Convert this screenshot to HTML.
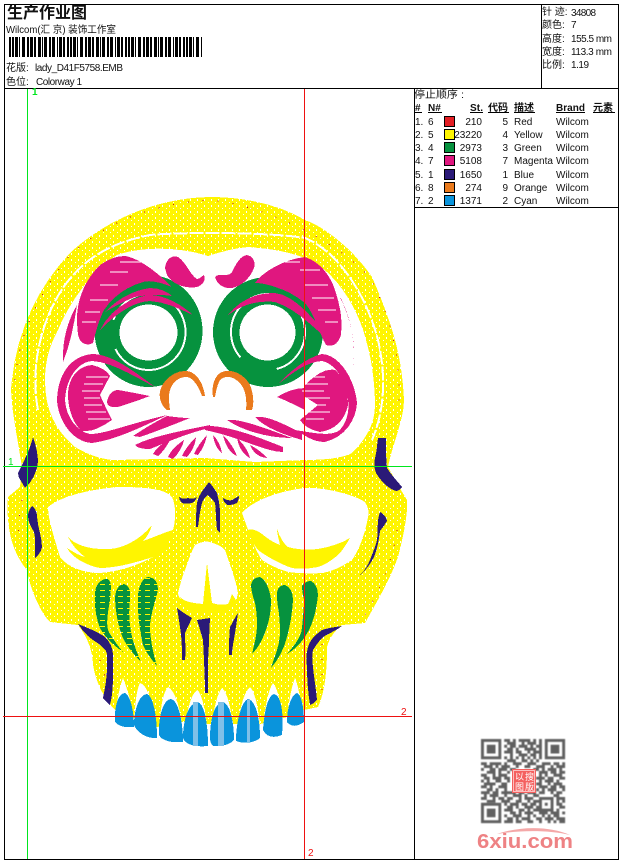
<!DOCTYPE html>
<html><head><meta charset="utf-8"><style>
html,body{margin:0;padding:0;background:#fff}
svg{display:block}
text{font-family:"Liberation Sans","WenQuanYi Zen Hei","Noto Sans CJK SC",sans-serif;font-size:10px;fill:#111}
.b{font-weight:bold}
</style></head><body>
<svg width="620" height="860" viewBox="0 0 620 860" xmlns="http://www.w3.org/2000/svg">
<defs>
<pattern id="y" width="7" height="6" patternUnits="userSpaceOnUse">
<rect width="7" height="6" fill="#fff500"/>
<rect x="1" y="1" width="1" height="2" fill="#fff"/>
<rect x="5" y="4" width="1" height="1" fill="#fff"/>
</pattern>
<pattern id="g" width="9" height="6" patternUnits="userSpaceOnUse">
<rect width="9" height="6" fill="#06923e"/>
<rect x="1" y="2" width="5" height="1" fill="#fff500"/>
</pattern>
</defs>
<g shape-rendering="crispEdges">
<!-- skull -->
<path fill="url(#y)" d="M210 197C150 198 100 225 70 253C40 285 15 330 11 390C12 415 18 440 22 467L20 487L8 497C6 515 10 540 15 550C20 562 27 570 27 570C30 590 42 615 50 622L78 625C86 635 90 645 92 655C93 680 105 700 115 710L134 718L157 727L183 722L208 724L234 724L260 724L284 718L304 710L318 707C326 690 327 665 327 647C330 635 338 628 342 625L365 623C375 605 390 580 398 557C405 530 408 510 407 500L401 490L388 467C392 445 404 420 404 400C402 360 395 330 372 277C350 245 320 225 305 220C280 205 245 197 210 197Z"/>
<path fill="#fff" d="M208 256C185 248 145 245 117 255C95 268 70 300 58 330C50 345 45 360 45 380C45 410 55 430 75 447C90 456 105 460 115 460L205 458L255 462L305 460C330 460 345 457 352 453C365 440 375 425 375 405C375 385 372 360 366 340C360 315 345 290 332 277C315 258 290 250 248 247C235 248 220 252 208 256Z"/>
<path fill="none" stroke="#fff" stroke-width="2" stroke-dasharray="14 2" d="M38 410C30 370 40 320 65 285C85 258 110 243 150 235C180 232 270 232 305 238C335 250 365 290 378 340C386 375 385 410 372 440"/>
<!-- sockets -->
<path fill="#fff" d="M48 507C60 497 85 490 117 487C140 487 165 488 172 497C176 505 176 520 173 530C165 545 160 555 153 557C135 567 115 572 100 573C85 573 68 568 60 557C55 540 48 520 48 507Z"/>
<path fill="#fff" d="M242 513C248 505 270 492 305 488C325 487 355 495 365 502C369 508 369 514 368 517C365 535 358 552 352 560C340 568 330 572 322 573C310 574 296 573 288 572C275 568 268 564 262 560C255 550 248 530 242 513Z"/>
<path fill="#fff500" d="M68 537C75 545 90 550 110 549C125 548 142 538 152 525C150 532 147 537 143 541C155 537 165 532 173 530C170 545 160 555 153 557C135 563 115 568 100 568C88 566 72 558 67 548C75 553 80 556 85 557C78 552 72 545 68 537Z"/>
<path fill="#fff500" d="M248 530C252 528 258 531 262 534C267 538 272 542 280 545C279 540 277 534 277 529C280 538 284 544 288 547C298 550 310 550 318 549C330 547 342 543 350 538C346 545 342 551 338 555C330 562 322 566 318 567C308 569 298 569 292 568C280 564 266 556 258 550C254 545 250 538 248 530Z"/>
<!-- nose -->
<path fill="#fff" d="M195 545C200 542 206 541 210 542C216 544 222 546 225 550C230 565 236 580 238 593C237 600 233 605 230 607L185 603C181 600 178 597 178 593C180 585 182 577 185 570C188 562 191 552 195 545Z"/>
<path fill="#fff500" d="M207 563L212 603C218 605 224 605 228 604C230 600 231 597 232 594C235 598 236 600 236 602C232 608 228 612 224 613L190 611C186 608 182 603 180 597C184 601 190 603 203 604Z"/>
<!-- gums -->
<g fill="#fff">
<path d="M114 730C116 705 119 688 123 678C127 688 133 705 135 730Z"/>
<path d="M134 740C134 710 136 690 140 683C147 684 155 705 158 740Z"/>
<path d="M159 745C159 710 163 692 168 687C175 690 182 710 184 745Z"/>
<path d="M184 748C185 715 190 695 197 690C202 692 207 715 209 748Z"/>
<path d="M210 748C212 715 216 695 222 688C228 692 233 715 235 748Z"/>
<path d="M236 745C238 710 244 692 250 687C255 692 260 710 261 745Z"/>
<path d="M262 740C264 710 268 690 273 683C278 688 283 710 285 740Z"/>
<path d="M286 730C288 705 291 688 295 678C299 688 302 705 304 730Z"/>
</g>
<!-- teeth -->
<g fill="#0a94dc">
<path d="M115 722C114 705 119 693 125 693C130 695 134 710 134 727C125 728 118 726 115 722Z"/>
<path d="M134 725C134 708 140 694 147 694C153 696 157 715 157 738C148 739 137 733 134 725Z"/>
<path d="M159 735C158 715 164 699 171 699C178 700 183 720 183 742C172 743 162 741 159 735Z"/>
<path d="M183 738C183 720 188 704 197 702C204 702 208 722 208 746C198 747 186 746 183 738Z"/>
<path d="M210 738C210 720 214 704 222 702C230 702 234 722 234 740C230 745 220 747 213 746C211 744 210 741 210 738Z"/>
<path d="M236 741C236 720 242 701 248 699C255 700 260 716 260 738C255 743 243 744 236 741Z"/>
<path d="M263 730C264 712 268 695 274 694C281 695 284 712 282 735C275 738 267 738 263 730Z"/>
<path d="M287 722C287 708 291 695 297 693C302 695 304 710 304 722C298 726 292 728 287 722Z"/>
</g>
<rect x="193" y="702" width="5" height="44" fill="#7fc0e8"/>
<rect x="218" y="702" width="6" height="44" fill="#7fc0e8"/>
<rect x="247" y="700" width="3" height="42" fill="#7fc0e8"/>
<!-- green teeth -->
<g fill="url(#g)">
<path d="M95 592C96 583 103 578 108 579C112 582 111 590 110 600C108 612 106 622 108 630C112 638 118 646 123 652C113 645 104 636 100 628C96 618 94 605 95 592Z"/>
<path d="M115 597C116 588 120 584 124 584C129 586 131 590 130 600C128 615 130 632 134 644C137 652 139 658 141 662C133 654 126 645 122 636C118 625 115 610 115 597Z"/>
<path d="M138 595C139 585 143 577 149 577C155 578 158 582 158 590C156 600 150 615 150 627C150 640 154 656 157 666C150 658 145 650 143 645C140 632 137 612 138 595Z"/>
</g>
<g fill="#06923e">
<path d="M251 585C252 579 256 577 260 577C266 580 270 590 271 600C271 615 268 625 264 635C261 643 256 650 252 654C254 645 257 635 257 625C257 615 256 608 255 603C253 597 251 590 251 585Z"/>
<path d="M277 592C278 587 281 585 285 585C290 587 293 592 293 600C292 615 290 625 288 633C285 648 278 660 271 668C275 655 280 645 280 633C280 622 279 612 278 607C277 602 277 596 277 592Z"/>
<path d="M302 586C304 582 308 581 311 581C315 583 318 588 318 595C317 605 315 615 312 623C308 635 298 648 287 654C295 645 301 637 302 628C303 615 304 608 304 600C303 595 302 590 302 586Z"/>
</g>
<!-- eyes -->
<ellipse cx="148.500" cy="331" rx="54" ry="56" fill="#06923e"/>
<ellipse cx="268" cy="332" rx="55" ry="55" fill="#06923e"/>
<ellipse cx="148.500" cy="332" rx="37" ry="38" fill="none" stroke="#fff" stroke-width="2" stroke-dasharray="100 30 50 20"/>
<ellipse cx="268" cy="332" rx="37" ry="38" fill="none" stroke="#fff" stroke-width="2" stroke-dasharray="50 40 100 20"/>
<ellipse cx="148.500" cy="332.500" rx="29" ry="28" fill="#fff"/>
<ellipse cx="267.500" cy="332.500" rx="28" ry="28" fill="#fff"/>
<!-- magenta -->
<g fill="#e0177f">
<path d="M77 323C76 300 85 280 100 265C110 258 118 256 125 256C140 258 160 275 172 287C160 282 150 280 143 282C125 287 112 298 104 310C98 322 95 335 93 343C88 346 80 345 78 335Z"/>
<path d="M100 330C110 310 130 297 150 295C165 295 182 305 193 315C178 308 165 302 150 301C130 302 112 318 100 330Z"/>
<path d="M105 312C118 298 135 290 150 288C160 288 168 292 172 296C160 294 145 295 135 297C122 302 112 308 105 312Z"/>
<path d="M63 362C62 340 68 320 77 305C74 325 70 345 63 362Z"/>
<path d="M165 268C166 258 173 255 178 257C186 262 190 275 197 279C200 279 203 275 204 275C206 280 203 285 197 287C185 289 172 284 167 275Z"/>
<path d="M57 400C58 372 72 356 92 354C112 354 135 372 155 387C135 377 112 362 92 361C78 362 66 378 65 400C66 418 78 432 90 434C105 434 125 425 167 415C140 428 115 440 92 443C72 442 58 420 57 400Z"/>
<path d="M68 395C68 378 78 366 92 365C102 367 108 372 110 376L100 395L107 410L112 420C100 428 92 432 82 431C74 425 68 410 68 395Z"/>
<path d="M107 402C108 395 112 390 118 390C130 392 140 394 150 396C140 400 130 403 118 407C112 408 107 406 107 402Z"/>
<path d="M133 436C145 428 155 422 167 416C175 417 182 418 190 418C175 424 155 432 140 437Z"/>
<path d="M135 445C150 437 180 431 210 425L210 428C190 432 165 443 150 449C143 449 137 448 135 445Z"/>
<path d="M153 454Q158 445 170 440Q165 450 158 456ZM168 457Q172 448 184 440Q182 450 173 459ZM182 456Q186 447 196 437Q195 448 187 457ZM194 454Q198 445 207 435Q205 446 198 455Z"/>
<path d="M227 420C240 418 270 430 292 438C270 438 245 432 227 420Z"/>
<path d="M255 417C270 415 290 428 302 433L302 440C285 435 265 428 255 417Z"/>
<path d="M205 426C230 425 265 440 283 447L283 452C265 452 240 437 205 430Z"/>
<path d="M213 435Q220 442 222 453Q215 448 213 435ZM223 435Q233 445 237 456Q227 452 223 435ZM237 438Q247 447 250 458Q240 453 237 438ZM250 445Q260 450 267 458Q255 457 250 445Z"/>
<path d="M255 283C262 272 285 259 305 257C320 262 330 275 335 290C340 305 343 320 341 335C338 345 332 347 326 345C320 335 315 315 305 303C295 295 285 290 278 288C268 284 260 283 255 283Z"/>
<path d="M228 315C240 300 255 293 275 293C295 295 315 320 335 345C320 335 300 310 275 302C255 300 240 306 228 315Z"/>
<path d="M353 367C356 345 352 320 338 293C348 310 357 340 353 367Z"/>
<path d="M215 277C220 272 228 278 232 272C236 264 240 256 247 255C253 256 256 262 254 268C250 278 242 286 232 288C225 289 217 285 215 277Z"/>
<path d="M277 385C290 372 305 358 322 354C340 355 355 380 357 403C356 420 345 437 325 442C312 442 305 435 295 430C315 433 330 437 340 430C349 420 350 405 347 395C344 378 335 364 322 361C305 362 290 375 277 385Z"/>
<path d="M305 385C315 375 325 368 335 370C345 378 348 395 348 405C345 420 335 430 320 432C310 430 303 425 300 420L318 405L302 395Z"/>
<path d="M277 397C285 392 295 388 305 388L305 410C295 405 285 400 277 397Z"/>
</g>
<path fill="none" stroke="#fff" stroke-width="1" d="M86 377H108M84 384H103M82 391H100M84 398H100M84 405H102M86 412H106M88 419H110
M302 377H325M304 384H328M302 391H324M304 398H330M304 405H326M304 412H330M306 419H324
M120 262H143M110 272H128M100 285H118M90 300H108M85 312H100M82 322H96
M285 262H300M300 270H320M305 285H328M312 298H334M318 310H336M325 322H338"/>
<!-- orange -->
<g fill="#ea7a1c">
<path d="M167 410C160 405 158 395 161 388C166 376 178 370 187 371C196 372 203 382 205 396L202 396C198 385 192 376 185 377C176 378 170 385 169 395C169 400 169 405 170 410Z"/>
<path d="M213 397C211 385 215 375 222 372C232 368 245 375 250 385C254 395 254 405 252 410L246 410C247 400 246 390 240 383C233 376 225 375 220 380C217 385 216 392 215 397Z"/>
</g>
<!-- blue -->
<g fill="#2b1a78">
<path d="M33 437C36 445 38 455 38 462C37 472 32 482 25 488C22 482 18 478 18 473C22 465 30 450 33 437Z"/>
<path d="M378 438L386 438C386 450 386 460 387 468C392 476 398 482 402 487C400 490 398 491 396 491C388 489 380 480 376 473C374 468 374 462 375 458C377 450 377 445 378 438Z"/>
<path d="M32 506C35 508 37 512 37 517C38 528 42 538 42 547C41 552 38 556 35 558C35 550 36 540 34 532C31 527 28 522 28 516C28 512 30 508 32 506Z"/>
<path d="M380 512C384 514 387 518 387 521C385 525 382 528 380 531C379 540 377 550 374 557C370 565 365 571 360 575C365 570 368 565 370 560C373 552 376 545 377 540C378 533 377 528 378 523C378 518 379 515 380 512Z"/>
<path d="M78 624C88 628 98 632 105 637C110 642 113 648 113 655C113 670 114 690 110 705C107 703 105 700 103 698C105 688 107 678 107 667C107 660 108 655 106 651C102 646 98 643 93 640C87 636 82 630 78 624Z"/>
<path d="M342 626C335 627 328 628 322 630C315 635 310 640 308 647C306 655 306 660 307 667C307 680 308 692 310 705C313 704 315 702 317 700C316 688 314 678 313 667C312 660 312 655 313 650C316 645 320 640 323 637C330 633 337 630 342 626Z"/>
<path d="M209 482C212 485 215 490 217 493C219 500 220 507 220 513L220 533L217 530C216 522 216 510 215 503C213 500 210 497 208 495C205 497 203 500 202 503C200 510 199 520 198 527L196 527C196 518 196 510 197 503C198 497 201 493 203 490C205 487 207 485 209 482Z"/>
<path d="M179 497C182 499 185 499 188 498C191 499 194 499 197 497C196 500 194 502 192 503C188 504 185 504 182 503C180 501 179 499 179 497Z"/>
<path d="M223 498C226 500 229 501 232 500C234 499 237 497 239 496C239 499 238 501 237 503C233 505 230 505 227 505C225 503 223 501 223 498Z"/>
<path d="M177 608C182 612 187 615 192 618C190 623 187 628 185 633C185 642 186 651 185 660L182 660C182 650 182 640 180 627C179 620 178 614 177 608Z"/>
<path d="M197 620L210 618C209 635 209 648 208 660L208 693L205 693C205 680 204 660 203 640C201 633 199 626 197 620Z"/>
<path d="M238 613C237 620 236 627 235 633C234 640 232 648 232 655L229 655C229 645 229 636 230 627C233 622 235 617 238 613Z"/>
</g>
<path fill="none" stroke="#c8102e" stroke-width="1" stroke-dasharray="1 14" d="M15 380C18 340 35 297 70 255C100 228 140 205 210 200C260 204 338 240 372 280C395 330 400 360 399 405M22 500C18 520 18 540 20 545M397 530C393 560 380 590 365 615M100 660L112 700M322 690L322 640"/>
<!-- frame -->
<g fill="#000">
<rect x="4" y="4" width="615" height="1"/><rect x="4" y="4" width="1" height="856"/><rect x="618" y="4" width="1" height="856"/><rect x="4" y="859" width="615" height="1"/>
<rect x="4" y="88" width="615" height="1"/><rect x="541" y="4" width="1" height="84"/><rect x="414" y="88" width="1" height="771"/><rect x="414" y="207" width="205" height="1"/>
</g>
<!-- guides -->
<rect x="27" y="89" width="1" height="770" fill="#00e61e"/>
<rect x="3" y="466" width="409" height="1" fill="#00e61e"/>
<rect x="304" y="89" width="1" height="770" fill="#ee1111"/>
<rect x="3" y="716" width="409" height="1" fill="#ee1111"/>
<!-- barcode -->
<line x1="9" y1="47" x2="202" y2="47" stroke="#000" stroke-width="20" stroke-dasharray="2 1 2 1 3 1 1 2 3 2 2 1 3 1 2 2 3 1 1 1 3 2 2 1 3 2 1 1 3 1 2 2"/>
<!-- swatches -->
<g stroke="#000">
<rect x="444.500" y="116.500" width="10" height="10" fill="#e31e24"/>
<rect x="444.500" y="129.500" width="10" height="10" fill="#fff500"/>
<rect x="444.500" y="142.500" width="10" height="10" fill="#06923e"/>
<rect x="444.500" y="155.500" width="10" height="10" fill="#e0177f"/>
<rect x="444.500" y="169.500" width="10" height="10" fill="#2b1a78"/>
<rect x="444.500" y="182.500" width="10" height="10" fill="#ea7a1c"/>
<rect x="444.500" y="195.500" width="10" height="10" fill="#0a94dc"/>
</g>
<g fill="#000">
<rect x="414" y="112" width="8" height="1"/><rect x="428" y="112" width="14" height="1"/><rect x="470" y="112" width="13" height="1"/><rect x="488" y="112" width="21" height="1"/><rect x="514" y="112" width="21" height="1"/><rect x="556" y="112" width="29" height="1"/><rect x="593" y="112" width="22" height="1"/>
</g>
</g>
<!-- header text -->
<text x="7" y="18" class="b" style="font-size:16px" textLength="80" lengthAdjust="spacingAndGlyphs">生产作业图</text>
<text x="6" y="33" textLength="110" lengthAdjust="spacingAndGlyphs">Wilcom(汇 京) 装饰工作室</text>
<text x="6" y="71">花版:</text><text x="35" y="71" textLength="88">lady_D41F5758.EMB</text>
<text x="6" y="85">色位:</text><text x="36" y="85" textLength="46">Colorway 1</text>
<text x="542" y="15">针 迹:</text><text x="571" y="16" textLength="25">34808</text>
<text x="542" y="28">颜色:</text><text x="571" y="28">7</text>
<text x="542" y="42">高度:</text><text x="571" y="42" textLength="41">155.5 mm</text>
<text x="542" y="55">宽度:</text><text x="571" y="55" textLength="41">113.3 mm</text>
<text x="542" y="68">比例:</text><text x="571" y="68" textLength="18">1.19</text>
<text x="32" y="95" class="b" style="fill:#00e61e">1</text>
<text x="8" y="465" style="fill:#00e61e">1</text>
<text x="401" y="715" style="fill:#ee1111">2</text>
<text x="308" y="856" style="fill:#ee1111">2</text>
<!-- table -->
<text x="414" y="98" textLength="50" lengthAdjust="spacingAndGlyphs">停止顺序 :</text>
<text x="415" y="111" class="b">#</text><text x="428" y="111" class="b">N#</text><text x="470" y="111" class="b" textLength="13">St.</text><text x="488" y="111" class="b">代码</text><text x="514" y="111" class="b">描述</text><text x="556" y="111" class="b" textLength="29">Brand</text><text x="593" y="111" class="b">元素</text>
<text x="415" y="125">1.</text><text x="428" y="125">6</text><text x="482" y="125" text-anchor="end">210</text><text x="508" y="125" text-anchor="end">5</text><text x="514" y="125">Red</text><text x="556" y="125">Wilcom</text>
<text x="415" y="138">2.</text><text x="428" y="138">5</text><text x="482" y="138" text-anchor="end">23220</text><text x="508" y="138" text-anchor="end">4</text><text x="514" y="138">Yellow</text><text x="556" y="138">Wilcom</text>
<text x="415" y="151">3.</text><text x="428" y="151">4</text><text x="482" y="151" text-anchor="end">2973</text><text x="508" y="151" text-anchor="end">3</text><text x="514" y="151">Green</text><text x="556" y="151">Wilcom</text>
<text x="415" y="164">4.</text><text x="428" y="164">7</text><text x="482" y="164" text-anchor="end">5108</text><text x="508" y="164" text-anchor="end">7</text><text x="514" y="164">Magenta</text><text x="556" y="164">Wilcom</text>
<text x="415" y="178">5.</text><text x="428" y="178">1</text><text x="482" y="178" text-anchor="end">1650</text><text x="508" y="178" text-anchor="end">1</text><text x="514" y="178">Blue</text><text x="556" y="178">Wilcom</text>
<text x="415" y="191">6.</text><text x="428" y="191">8</text><text x="482" y="191" text-anchor="end">274</text><text x="508" y="191" text-anchor="end">9</text><text x="514" y="191">Orange</text><text x="556" y="191">Wilcom</text>
<text x="415" y="204">7.</text><text x="428" y="204">2</text><text x="482" y="204" text-anchor="end">1371</text><text x="508" y="204" text-anchor="end">2</text><text x="514" y="204">Cyan</text><text x="556" y="204">Wilcom</text>
<!-- QR -->
<g transform="translate(481 739) scale(2.9)" style="filter:blur(.15px)">
<g fill="#606060">
<path fill-rule="evenodd" d="M0 0h7v7h-7zM1 1v5h5v-5zM2 2h3v3h-3z"/>
<path fill-rule="evenodd" d="M22 0h7v7h-7zM23 1v5h5v-5zM24 2h3v3h-3z"/>
<path fill-rule="evenodd" d="M0 22h7v7h-7zM1 23v5h5v-5zM2 24h3v3h-3z"/>
<path fill-rule="evenodd" d="M20 20h5v5h-5zM21 21v3h3v-3zM22 22h1v1h-1z"/>
</g>
<path fill="none" stroke="#606060" stroke-width="1" d="M8 .5h2M11 .5h1M13 .5h4M18 .5h1M20 .5h1
M9 1.500h3M14 1.500h1M16 1.500h3M20 1.500h1
M8 2.500h1M10 2.500h2M13 2.500h3M17 2.500h1M19 2.500h2
M9 3.500h2M12 3.500h1M15 3.500h4M20 3.500h1
M8 4.500h3M12 4.500h2M16 4.500h1M18 4.500h3
M10 5.500h1M13 5.500h3M17 5.500h2M20 5.500h1
M8 6.500h1M10 6.500h1M12 6.500h1M14 6.500h1M16 6.500h1M18 6.500h1M20 6.500h1
M9 7.500h3M14 7.500h2M17 7.500h1M19 7.500h1
M0 8.500h2M3 8.500h4M8 8.500h1M11 8.500h3M16 8.500h3M21 8.500h3M25 8.500h2M28 8.500h1
M1 9.500h3M5 9.500h1M7 9.500h3M12 9.500h1M15 9.500h2M19 9.500h3M24 9.500h1M26 9.500h3
M0 10.500h1M3 10.500h2M6 10.500h3M10 10.500h2M18 10.500h2M21 10.500h1M23 10.500h3M27 10.500h1
M2 11.500h3M6 11.500h1M9 11.500h1M20 11.500h3M24 11.500h2M27 11.500h2
M0 12.500h2M4 12.500h1M6 12.500h3M20 12.500h1M22 12.500h1M25 12.500h3
M1 13.500h2M4 13.500h3M8 13.500h2M19 13.500h3M23 13.500h2M27 13.500h2
M0 14.500h1M2 14.500h1M5 14.500h2M9 14.500h1M20 14.500h1M22 14.500h3M26 14.500h1
M1 15.500h4M7 15.500h2M19 15.500h2M23 15.500h1M25 15.500h3
M0 16.500h2M3 16.500h1M6 16.500h3M20 16.500h3M24 16.500h2M27 16.500h2
M2 17.500h2M5 17.500h1M8 17.500h1M19 17.500h1M21 17.500h1M23 17.500h3M28 17.500h1
M0 18.500h3M4 18.500h2M7 18.500h5M13 18.500h2M16 18.500h3M20 18.500h2M24 18.500h1M26 18.500h2
M1 19.500h1M3 19.500h3M8 19.500h1M11 19.500h3M15 19.500h1M18 19.500h2M25 19.500h2
M0 20.500h2M4 20.500h1M6 20.500h2M9 20.500h2M13 20.500h1M15 20.500h3M26 20.500h3
M2 21.500h3M7 21.500h3M12 21.500h2M16 21.500h1M18 21.500h2M26 21.500h1M28 21.500h1
M8 22.500h1M10 22.500h3M14 22.500h2M17 22.500h2M26 22.500h2
M9 23.500h2M12 23.500h1M15 23.500h3M19 23.500h1M27 23.500h2
M8 24.500h3M13 24.500h2M16 24.500h1M18 24.500h2M26 24.500h1
M10 25.500h2M13 25.500h1M15 25.500h3M20 25.500h3M24 25.500h3M28 25.500h1
M8 26.500h1M11 26.500h3M16 26.500h1M18 26.500h1M21 26.500h1M23 26.500h1M25 26.500h2
M9 27.500h2M12 27.500h1M14 27.500h3M19 27.500h2M22 27.500h3M26 27.500h3
M8 28.500h3M12 28.500h2M16 28.500h2M20 28.500h1M23 28.500h1M25 28.500h1M27 28.500h2"/>
</g>
<rect x="512" y="769" width="24" height="24" fill="#f4605f"/>
<rect x="513.500" y="770.500" width="21" height="21" fill="none" stroke="#fbc0c0" stroke-width="1"/>
<text x="515" y="780" style="font-size:9px;fill:#fff">以</text><text x="525" y="780" style="font-size:9px;fill:#fff">搜</text>
<text x="515" y="790" style="font-size:9px;fill:#fff">图</text><text x="525" y="790" style="font-size:9px;fill:#fff">版</text>
<!-- logo -->
<path d="M497 834C520 826 550 826 570 835C550 830 520 830 497 834Z" fill="#f4a8a8"/>
<text x="477" y="848" class="b" style="font-size:20px;fill:#ee8284;font-weight:bold" textLength="96" lengthAdjust="spacingAndGlyphs">6xiu.com</text>
</svg>
</body></html>
